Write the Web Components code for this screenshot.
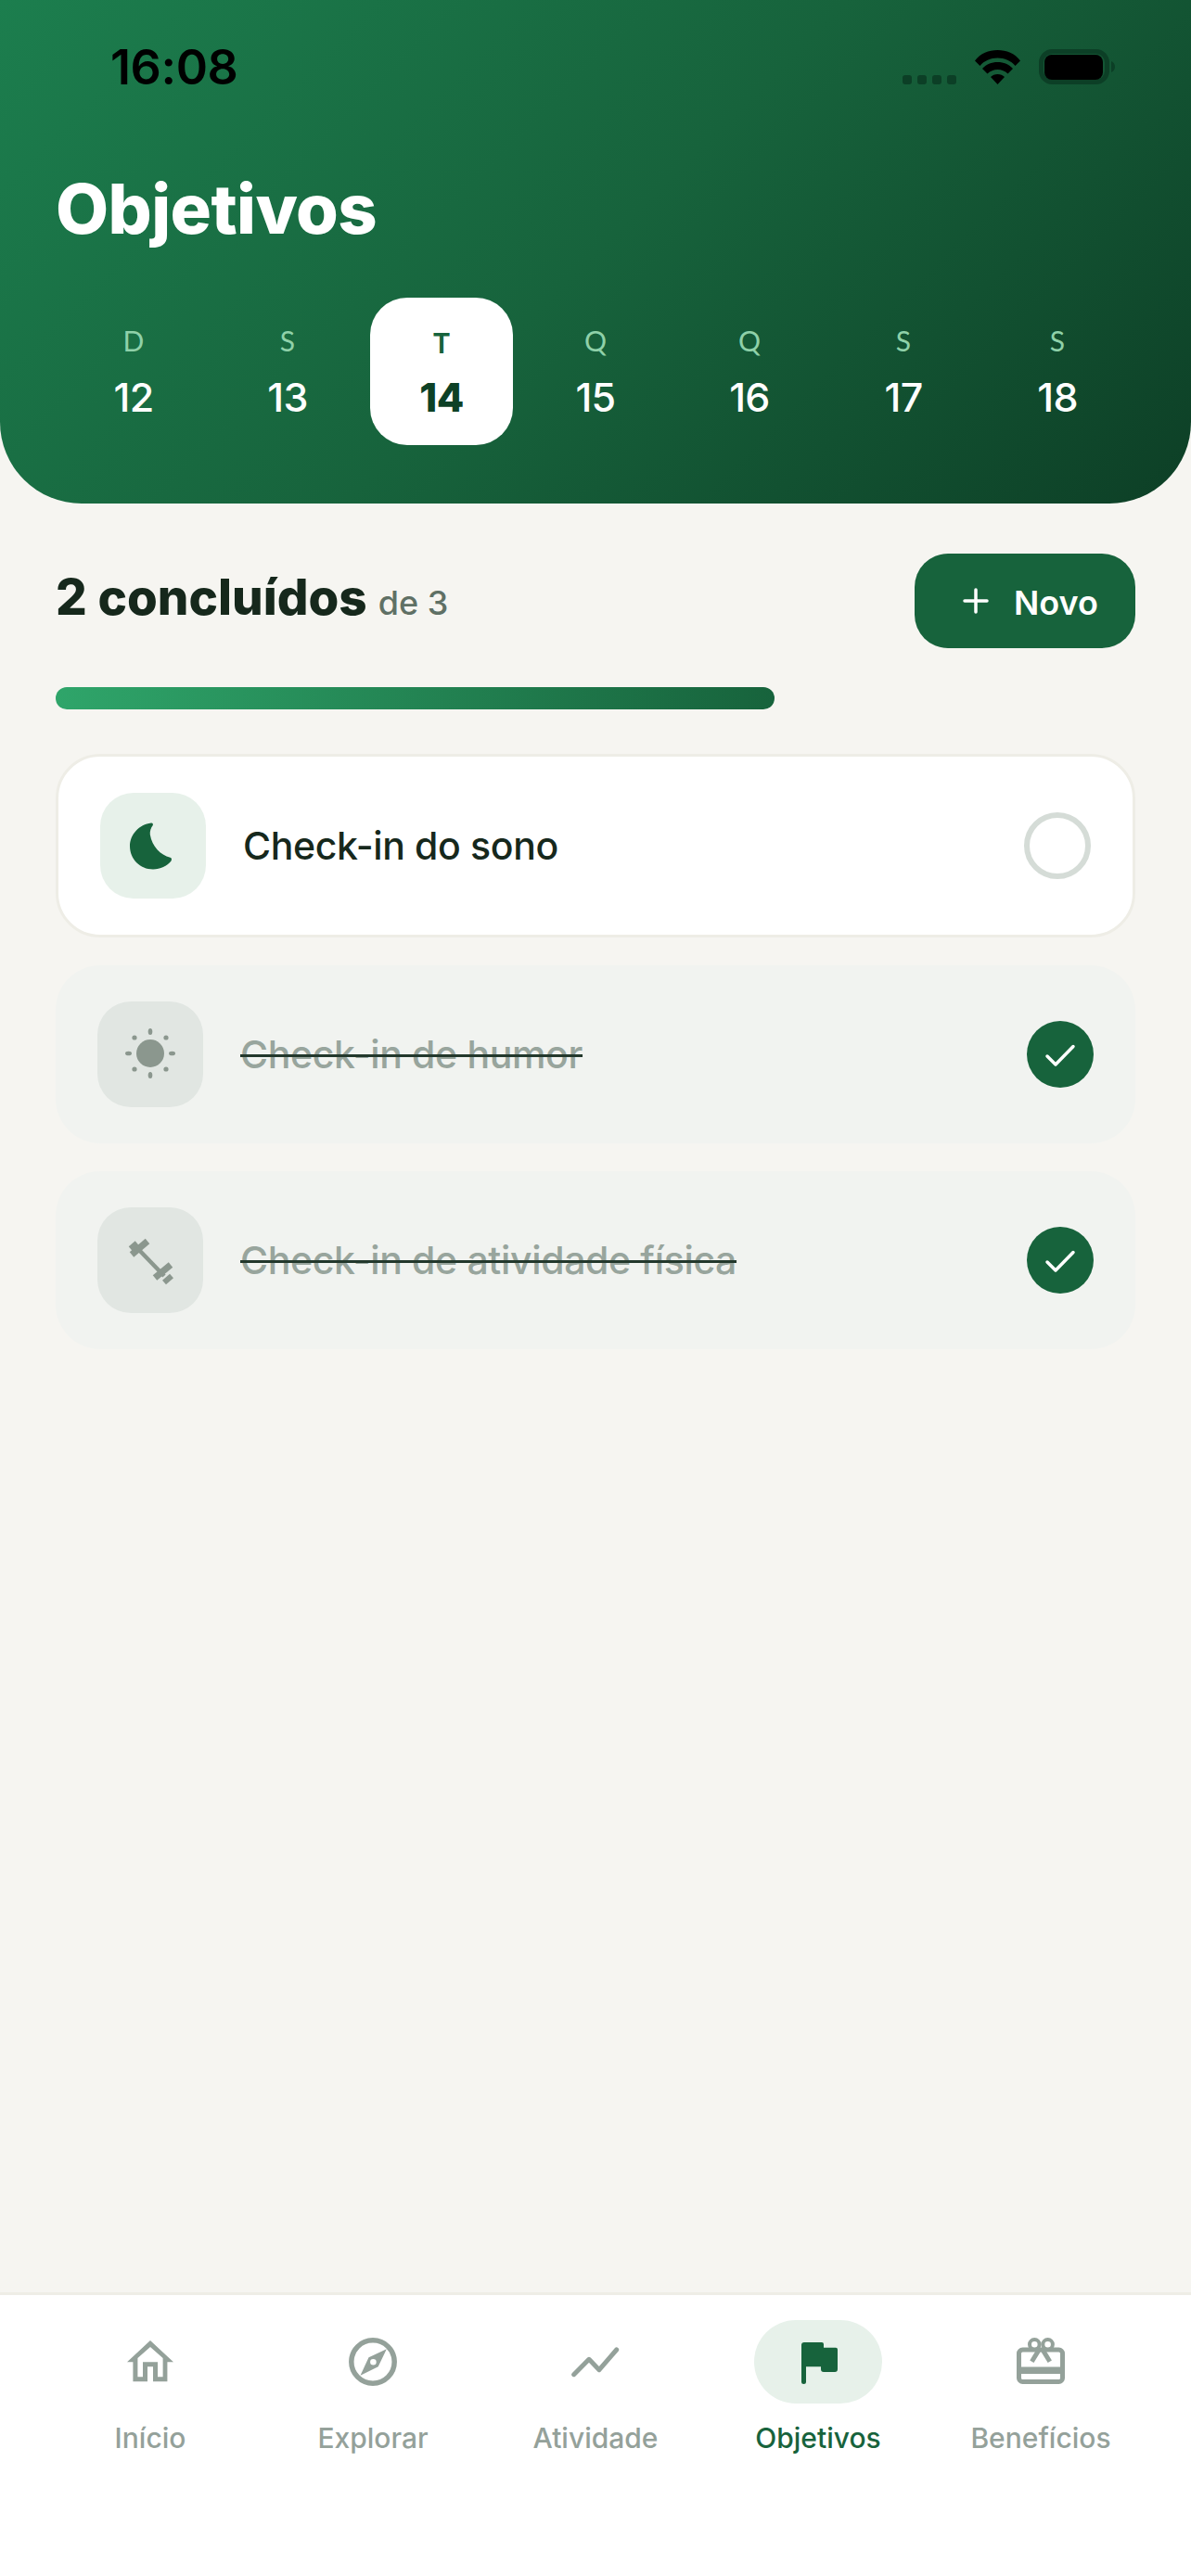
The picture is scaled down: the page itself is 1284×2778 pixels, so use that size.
<!doctype html>
<html><head><meta charset="utf-8">
<style>
html,body{margin:0;padding:0;background:#f6f5f1}
body{width:1284px;height:2778px;font-family:"Inter","Liberation Sans",sans-serif}
</style></head><body>
<goals-app>
  <goals-header slot="header"></goals-header>
  <goals-summary done="2 concluídos" total="de 3"></goals-summary>
  <goals-list>
    <goal-card label="Check-in do sono" icon="moon"></goal-card>
    <goal-card label="Check-in de humor" icon="sun" done></goal-card>
    <goal-card label="Check-in de atividade física" icon="dumbbell" done></goal-card>
  </goals-list>
  <tab-bar slot="tabs"></tab-bar>
</goals-app>
<script>
const ICONS={
 moon:'<path d="M55 32.5C42 34 32 45 32 57.500 32 71.500 43 82.500 57 82.500 65 82.500 72 79 76.500 73.500 77.500 71.500 77 70.300 75.500 69.800 65 67 56 58 53.800 45 53.500 41 54.500 38 56.800 35 57.300 33.300 56.500 32.300 55 32.500Z" fill="currentColor"/>',
 sun:'<g fill="currentColor"><circle cx="57" cy="56" r="15"/><ellipse cx="57" cy="32.500" rx="2.300" ry="3.500"/><ellipse cx="57" cy="79.500" rx="2.300" ry="3.500"/><ellipse cx="33.500" cy="56" rx="3.500" ry="2.300"/><ellipse cx="80.500" cy="56" rx="3.500" ry="2.300"/><circle cx="40" cy="39" r="2.600"/><circle cx="74" cy="39" r="2.600"/><circle cx="40" cy="73" r="2.600"/><circle cx="74" cy="73" r="2.600"/></g>',
 dumbbell:'<g fill="none" stroke="currentColor" stroke-linecap="butt"><path d="M44 45 72 74" stroke-width="4.500"/><path d="M37 51 54 36.500" stroke-width="7"/><path d="M36 45 43 39" stroke-width="7"/><path d="M62 76 79 62" stroke-width="7"/><path d="M72 81 80 74" stroke-width="6"/></g>'
};
const def=(n,h)=>{customElements.define(n,class extends HTMLElement{constructor(){super();this.attachShadow({mode:'open'}).innerHTML=typeof h==='function'?h(this):h}})};

def('goals-app',`<style>:host{display:flex;flex-direction:column;width:1284px;height:2778px;background:#f6f5f1;overflow:hidden}
main{flex:1;padding:54px 60px 0;display:flex;flex-direction:column}
</style><slot name="header"></slot><main><slot></slot></main><slot name="tabs"></slot>`);

def('status-bar',`<style>:host{display:flex;justify-content:space-between;align-items:flex-start;height:120px;box-sizing:border-box;padding:53px 82px 0 119px}
span{font:600 52px/40px Inter,"Liberation Sans",sans-serif;color:#000;letter-spacing:-.4px}
svg{display:block}</style>
<span>16:08</span>
<svg width="229" height="40" viewBox="0 0 229 40">
<g fill="#0c3f26"><rect x="0" y="28" width="10" height="10" rx="3"/><rect x="16" y="28" width="10" height="10" rx="3"/><rect x="32" y="28" width="10" height="10" rx="3"/><rect x="48" y="28" width="10" height="10" rx="3"/></g>
<g fill="#000"><path d="M78 12.500C84 4.500 93 1 102.500 1S121 4.500 127 12.500L121.500 18C117 12.500 110 9.500 102.500 9.500S88 12.500 83.500 18Z"/>
<path d="M86 21C90 16.500 96 14 102.500 14S115 16.500 119 21L113.500 26.500C110.500 23.500 106.500 22 102.500 22S94.500 23.500 91.500 26.500Z"/>
<path d="M95 30C97 28 99.500 27 102.500 27S108 28 110 30L102.500 38Z"/></g>
<rect x="149.500" y="2.500" width="71" height="33" rx="12" fill="none" stroke="#0c3f26" stroke-width="5"/>
<rect x="153" y="6" width="63" height="27" rx="8" fill="#000"/>
<path d="M225 13c2.500 1 4 3.300 4 6s-1.500 5-4 6Z" fill="#0c3f26"/>
</svg>`);

def('date-chip',h=>`<style>:host{display:flex;flex-direction:column;align-items:center;box-sizing:border-box;width:154px;height:159px;padding-top:28px;border-radius:40px}
.d{font:400 30px/36px Lato,"Liberation Sans",sans-serif;color:#8fd1a9}
.n{font:500 43px/52px Inter,"Liberation Sans",sans-serif;color:#fff;margin-top:17px;letter-spacing:-.6px}
:host([active]){background:#fff;padding-top:30px}
:host([active]) .d{color:#17633c;font-weight:700}
:host([active]) .n{color:#0d4126;font-weight:800;margin-top:15px}
</style><div class="d">${h.getAttribute('d')}</div><div class="n">${h.getAttribute('n')}</div>`);

def('goals-header',`<style>:host{display:block;height:543px;box-sizing:border-box;border-radius:0 0 88px 88px;background:linear-gradient(135deg,#1c7e4e 0%,#17633c 50%,#0d3f26 100%)}
h1{margin:60px 0 0;padding:0 60px;font:800 74px/90px Inter,"Liberation Sans",sans-serif;color:#fff;letter-spacing:-.6px}
.row{display:flex;gap:12px;padding:0 0 0 67px;margin-top:51px}
</style><status-bar></status-bar><h1>Objetivos</h1>
<div class="row"><date-chip d="D" n="12"></date-chip><date-chip d="S" n="13"></date-chip><date-chip d="T" n="14" active></date-chip><date-chip d="Q" n="15"></date-chip><date-chip d="Q" n="16"></date-chip><date-chip d="S" n="17"></date-chip><date-chip d="S" n="18"></date-chip></div>`);

def('goals-summary',h=>`<style>:host{display:block}
.top{display:flex;justify-content:space-between;align-items:center;height:102px}
.t{font:800 53px/60px Inter,"Liberation Sans",sans-serif;color:#16281c;display:flex;align-items:baseline;gap:12px;padding-bottom:8px}
.t small{font:500 36px/40px Inter,"Liberation Sans",sans-serif;color:#5f7065}
button{all:unset;display:flex;align-items:center;gap:27px;box-sizing:border-box;width:238px;height:102px;padding-left:52px;border-radius:36px;background:#17633c;color:#fff;font:600 36px/40px Inter,"Liberation Sans",sans-serif}
button span{padding-top:3px}
.bar{margin-top:42px;height:24px;width:775px;border-radius:12px;background:linear-gradient(90deg,#2fa56a,#17633c)}
svg{display:block}</style>
<div class="top"><div class="t">${h.getAttribute('done')}<small>${h.getAttribute('total')}</small></div>
<button><svg width="28" height="28" viewBox="0 0 28 28"><path d="M14 2V26M2 14H26" stroke="#fff" stroke-width="3.500" stroke-linecap="round"/></svg><span>Novo</span></button></div>
<div class="bar"></div>`);

def('goals-list',`<style>:host{display:flex;flex-direction:column;gap:30px;margin-top:48px}</style><slot></slot>`);

def('goal-card',h=>{const d=h.hasAttribute('done');return `<style>:host{display:flex;align-items:center;box-sizing:border-box;width:1164px;padding:39px 45px;border-radius:48px;background:#fff;border:3px solid #eeede6}
:host([done]){background:#f1f3f0;border:0}
.i{width:114px;height:114px;border-radius:36px;background:#e7f1ea;color:#17633c;flex:none}
:host([done]) .i{background:#e1e6e2;color:#8b978e}
.l{flex:1;margin-left:40px;font:500 41px/56px Inter,"Liberation Sans",sans-serif;color:#16281c;letter-spacing:-.35px}
:host([done]) .l span{color:#98a59d;text-decoration:line-through;text-decoration-color:#23382c;text-decoration-thickness:3px}
.c{width:72px;height:72px;border-radius:50%;box-sizing:border-box;border:6px solid #d5dcd7;flex:none}
.k{width:72px;height:72px;border-radius:50%;background:#17633c;flex:none}
svg{display:block}</style>
<div class="i"><svg width="114" height="114" viewBox="0 0 114 114">${ICONS[h.getAttribute('icon')]}</svg></div>
<div class="l"><span>${h.getAttribute('label')}</span></div>
${d?'<div class="k"><svg width="72" height="72" viewBox="0 0 72 72"><path d="M22 38 31 47 50 27.500" fill="none" stroke="#fff" stroke-width="3.500" stroke-linecap="round" stroke-linejoin="round"/></svg></div>':'<div class="c"></div>'}`});

const TAB={
 home:'<path fill-rule="evenodd" d="M26 3 51 26.300H44.400V47.300H29V31.200H23V47.300H7.400V26.300H1ZM26 10 12.400 22V42.300H18V26.200H34V42.300H39.600V22Z" fill="currentColor"/>',
 compass:'<circle cx="26" cy="26" r="23.200" fill="none" stroke="currentColor" stroke-width="5.500"/><path fill-rule="evenodd" d="M40.800 12.300 31.700 31.300 12.500 40.700 21.500 21.300ZM26.400 23A3.300 3.300 0 1 0 26.400 29.600 3.300 3.300 0 1 0 26.400 23Z" fill="currentColor"/>',
 trend:'<path d="M2.700 39.700 19 23.300 30 34.700 48.700 13" fill="none" stroke="currentColor" stroke-width="5" stroke-linecap="round" stroke-linejoin="round"/>',
 flag:'<path d="M8 8a3 3 0 0 1 3-3H30a2 2 0 0 1 2 2V10.700H45a2 2 0 0 1 2 2V34a3 3 0 0 1-3 3H32a3 3 0 0 1-3-3V31.300H13V47.500a2.500 2.500 0 0 1-5 0Z" fill="currentColor"/>',
 gift:'<rect x="2.500" y="13" width="47" height="34.500" rx="4" fill="none" stroke="currentColor" stroke-width="5"/><rect x="1" y="31.500" width="50" height="7.500" fill="currentColor"/><path d="M25.400 11 16.400 25.700M26.800 11 35.800 25.700" stroke="currentColor" stroke-width="5" fill="none"/><circle cx="19.300" cy="7.300" r="5.300" fill="#fff" stroke="currentColor" stroke-width="4"/><circle cx="33.600" cy="7.300" r="5.300" fill="#fff" stroke="currentColor" stroke-width="4"/>'
};
def('tab-item',h=>`<style>:host{display:flex;flex-direction:column;align-items:center;width:240px;color:#94a19a}
.w{width:138px;height:90px;display:flex;align-items:center;justify-content:center;border-radius:45px}
:host([active]) .w{background:#e7f1ea;color:#17633c}
:host([active]) .t{color:#17633c}
.t{font:500 30px/40px Inter,"Liberation Sans",sans-serif;margin-top:17px;white-space:nowrap}
svg{display:block}</style>
<div class="w"><svg width="52" height="52" viewBox="0 0 52 52">${TAB[h.getAttribute('icon')]}</svg></div><div class="t">${h.getAttribute('label')}</div>`);

def('tab-bar',`<style>:host{display:flex;justify-content:center;box-sizing:border-box;height:306px;background:#fff;border-top:3px solid #eeede6;padding-top:27px}
</style><tab-item icon="home" label="Início"></tab-item><tab-item icon="compass" label="Explorar"></tab-item><tab-item icon="trend" label="Atividade"></tab-item><tab-item icon="flag" label="Objetivos" active></tab-item><tab-item icon="gift" label="Benefícios"></tab-item>`);
</script>
</body></html>
